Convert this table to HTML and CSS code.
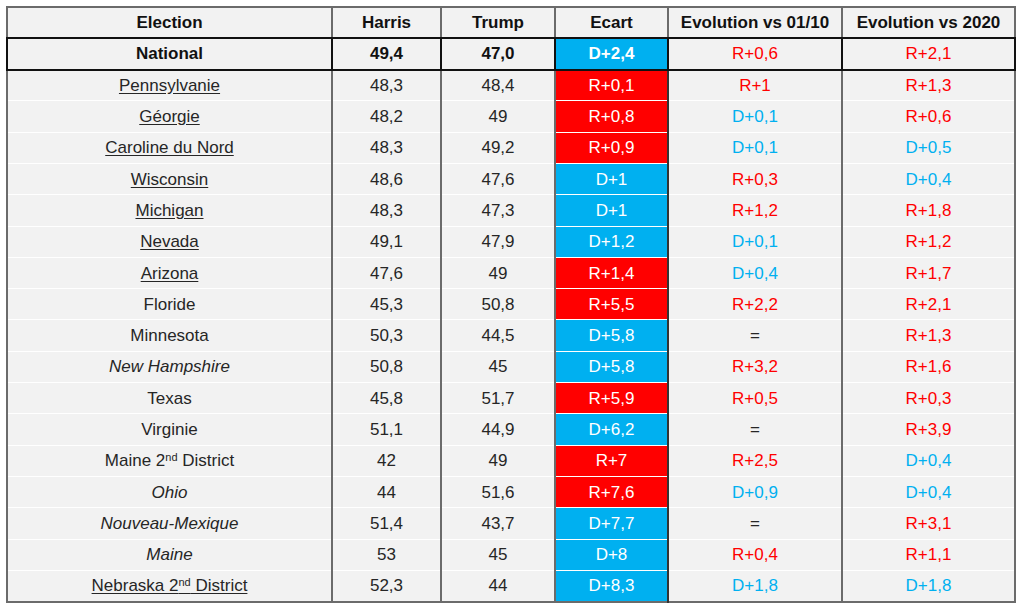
FILE: index.html
```html
<!DOCTYPE html>
<html lang="fr">
<head>
<meta charset="utf-8">
<title>Sondages</title>
<link rel="stylesheet" href="styles.css">
</head>
<body>
<table class="polls">
  <colgroup>
    <col class="c-name"><col class="c-h"><col class="c-t"><col class="c-e"><col class="c-v1"><col class="c-v2">
  </colgroup>
  <thead>
    <tr><th>Election</th><th>Harris</th><th>Trump</th><th>Ecart</th><th>Evolution vs 01/10</th><th>Evolution vs 2020</th></tr>
  </thead>
  <tbody>
    <tr class="national"><td>National</td><td>49,4</td><td>47,0</td><td class="gap d">D+2,4</td><td class="r">R+0,6</td><td class="r">R+2,1</td></tr>
    <tr><td><u>Pennsylvanie</u></td><td>48,3</td><td>48,4</td><td class="gap rr">R+0,1</td><td class="r">R+1</td><td class="r">R+1,3</td></tr>
    <tr><td><u>Géorgie</u></td><td>48,2</td><td>49</td><td class="gap rr">R+0,8</td><td class="b">D+0,1</td><td class="r">R+0,6</td></tr>
    <tr><td><u>Caroline du Nord</u></td><td>48,3</td><td>49,2</td><td class="gap rr">R+0,9</td><td class="b">D+0,1</td><td class="b">D+0,5</td></tr>
    <tr><td><u>Wisconsin</u></td><td>48,6</td><td>47,6</td><td class="gap d">D+1</td><td class="r">R+0,3</td><td class="b">D+0,4</td></tr>
    <tr><td><u>Michigan</u></td><td>48,3</td><td>47,3</td><td class="gap d">D+1</td><td class="r">R+1,2</td><td class="r">R+1,8</td></tr>
    <tr><td><u>Nevada</u></td><td>49,1</td><td>47,9</td><td class="gap d">D+1,2</td><td class="b">D+0,1</td><td class="r">R+1,2</td></tr>
    <tr><td><u>Arizona</u></td><td>47,6</td><td>49</td><td class="gap rr">R+1,4</td><td class="b">D+0,4</td><td class="r">R+1,7</td></tr>
    <tr><td>Floride</td><td>45,3</td><td>50,8</td><td class="gap rr">R+5,5</td><td class="r">R+2,2</td><td class="r">R+2,1</td></tr>
    <tr><td>Minnesota</td><td>50,3</td><td>44,5</td><td class="gap d">D+5,8</td><td>=</td><td class="r">R+1,3</td></tr>
    <tr><td><i>New Hampshire</i></td><td>50,8</td><td>45</td><td class="gap d">D+5,8</td><td class="r">R+3,2</td><td class="r">R+1,6</td></tr>
    <tr><td>Texas</td><td>45,8</td><td>51,7</td><td class="gap rr">R+5,9</td><td class="r">R+0,5</td><td class="r">R+0,3</td></tr>
    <tr><td>Virginie</td><td>51,1</td><td>44,9</td><td class="gap d">D+6,2</td><td>=</td><td class="r">R+3,9</td></tr>
    <tr><td>Maine 2<sup>nd</sup> District</td><td>42</td><td>49</td><td class="gap rr">R+7</td><td class="r">R+2,5</td><td class="b">D+0,4</td></tr>
    <tr><td><i>Ohio</i></td><td>44</td><td>51,6</td><td class="gap rr">R+7,6</td><td class="b">D+0,9</td><td class="b">D+0,4</td></tr>
    <tr><td><i>Nouveau-Mexique</i></td><td>51,4</td><td>43,7</td><td class="gap d">D+7,7</td><td>=</td><td class="r">R+3,1</td></tr>
    <tr><td><i>Maine</i></td><td>53</td><td>45</td><td class="gap d">D+8</td><td class="r">R+0,4</td><td class="r">R+1,1</td></tr>
    <tr><td><u>Nebraska 2<sup>nd</sup> District</u></td><td>52,3</td><td>44</td><td class="gap d">D+8,3</td><td class="b">D+1,8</td><td class="b">D+1,8</td></tr>
  </tbody>
</table>
</body>
</html>
```
FILE: styles.css
```css
html, body {
  margin: 0;
  padding: 0;
  background: #ffffff;
}

body {
  padding: 6px 0 0 6px;
  font-family: "Liberation Sans", Arial, sans-serif;
}

.polls {
  border-collapse: collapse;
  table-layout: fixed;
  width: 1010px;
  border: 2px solid #6b6b6b;
  background: #f2f2f2;
  font-size: 17px;
  color: #262626;
}

.polls tr {
  height: 31.3px;
}

.c-name { width: 325px; }
.c-h { width: 109px; }
.c-t { width: 114px; }
.c-e { width: 113px; }
.c-v1 { width: 174px; }
.c-v2 { width: 173px; }

.polls th,
.polls td {
  padding: 0;
  text-align: center;
  vertical-align: middle;
  border-left: 2px solid #6b6b6b;
  border-right: 2px solid #6b6b6b;
  border-top: 1px solid #ffffff;
  border-bottom: 1px solid #ffffff;
  line-height: 19px;
}

.polls th {
  font-weight: bold;
  color: #111111;
  border-top: 2px solid #6b6b6b;
  border-bottom: 2px solid #111111;
}

.polls tr.national td {
  font-weight: bold;
  color: #111111;
  border: 2px solid #111111;
}

.polls td.gap {
  color: #ffffff;
  border-left: 2px solid #333333;
  border-right: 2px solid #333333;
}

.polls tr.national td.gap {
  color: #ffffff;
}

.polls td.d { background: #00b0f0; }
.polls td.rr { background: #ff0000; }

.polls td.r,
.polls tr.national td.r {
  color: #ff0000;
  font-weight: normal;
}

.polls td.b { color: #00b0f0; }

.polls u {
  text-decoration: underline;
  text-underline-offset: 2px;
}

.polls sup {
  font-size: 11px;
  line-height: 0;
  vertical-align: 5px;
}
```
